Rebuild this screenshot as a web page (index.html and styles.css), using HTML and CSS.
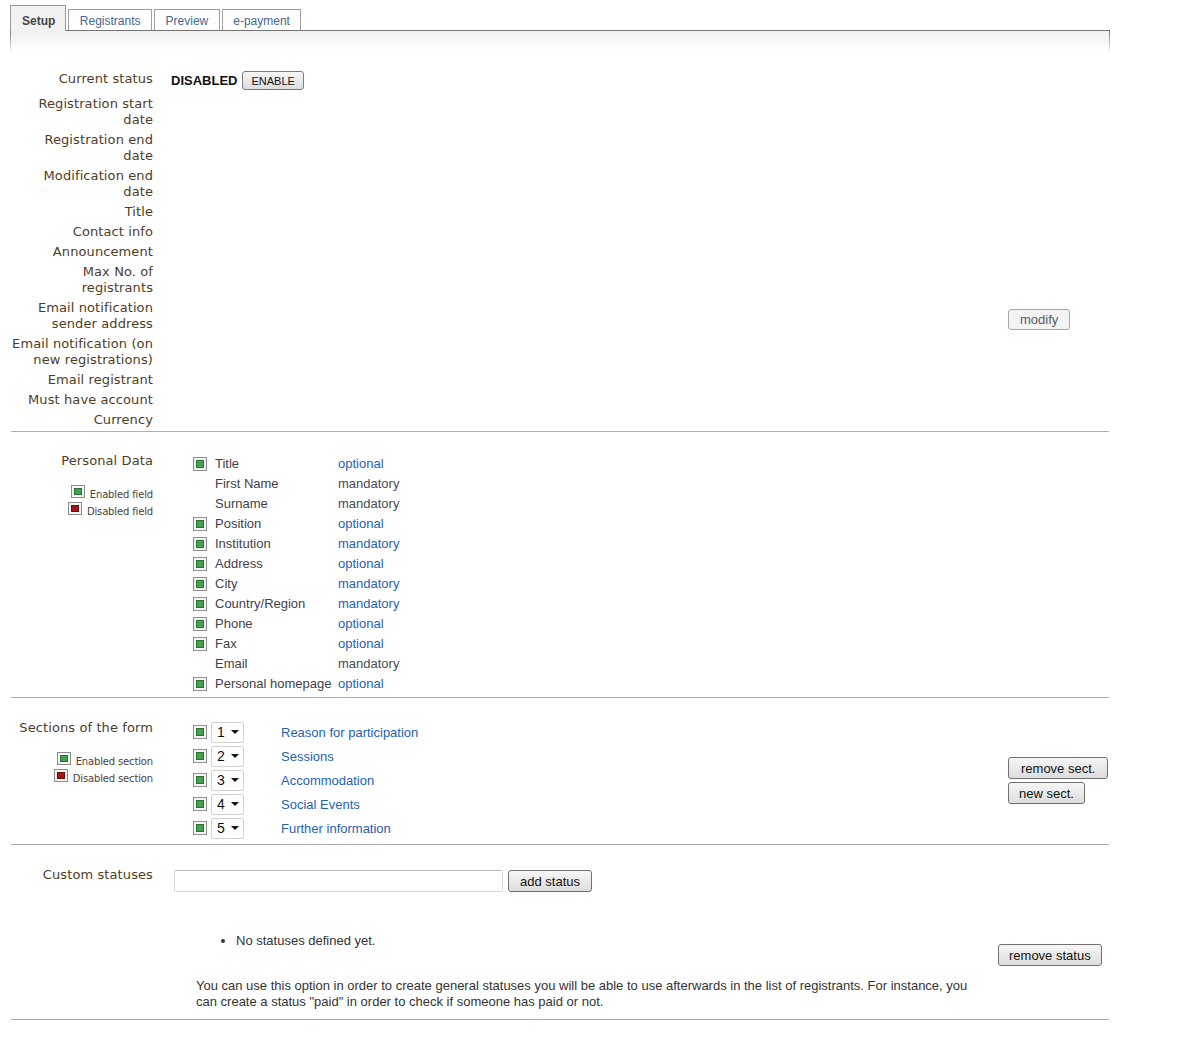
FILE: index.html
```html
<!DOCTYPE html>
<html>
<head>
<meta charset="utf-8">
<title>Registration setup</title>
<link rel="stylesheet" href="styles.css">
</head>
<body>
<div class="page">
  <div class="tabs">
    <span class="tab active">Setup</span>
    <span class="tab">Registrants</span>
    <span class="tab">Preview</span>
    <span class="tab">e-payment</span>
  </div>
  <div class="tabhead"></div>

  <div class="sections">
    <div class="section s-general">
      <div class="lbl">Current status</div>
      <div class="val status-val"><span class="disabled">DISABLED</span><button class="btn-small">ENABLE</button></div>
      <div class="lbl">Registration start<br>date</div><div class="val"></div>
      <div class="lbl">Registration end<br>date</div><div class="val"></div>
      <div class="lbl">Modification end<br>date</div><div class="val"></div>
      <div class="lbl">Title</div><div class="val"></div>
      <div class="lbl">Contact info</div><div class="val"></div>
      <div class="lbl">Announcement</div><div class="val"></div>
      <div class="lbl">Max No. of<br>registrants</div><div class="val"></div>
      <div class="lbl">Email notification<br>sender address</div><div class="val"></div>
      <div class="lbl">Email notification (on<br>new registrations)</div><div class="val"></div>
      <div class="lbl">Email registrant</div><div class="val"></div>
      <div class="lbl">Must have account</div><div class="val"></div>
      <div class="lbl">Currency</div><div class="val"></div>
      <div class="actions modify-col"><button class="btn-light">modify</button></div>
    </div>

    <div class="section s-personal">
      <div class="side">
        <div class="side-title pd-title">Personal Data</div>
        <div class="legend pd-legend">
          <div class="leg-item"><span class="chk sm"></span><span class="leg-text">Enabled field</span></div>
          <div class="leg-item"><span class="chk sm off"></span><span class="leg-text">Disabled field</span></div>
        </div>
      </div>
      <div class="body fields">
        <div class="frow"><span class="fchk"><span class="chk"></span></span><span class="fname">Title</span><a class="link">optional</a></div>
        <div class="frow"><span class="fchk"></span><span class="fname">First Name</span><span class="plain">mandatory</span></div>
        <div class="frow"><span class="fchk"></span><span class="fname">Surname</span><span class="plain">mandatory</span></div>
        <div class="frow"><span class="fchk"><span class="chk"></span></span><span class="fname">Position</span><a class="link">optional</a></div>
        <div class="frow"><span class="fchk"><span class="chk"></span></span><span class="fname">Institution</span><a class="link">mandatory</a></div>
        <div class="frow"><span class="fchk"><span class="chk"></span></span><span class="fname">Address</span><a class="link">optional</a></div>
        <div class="frow"><span class="fchk"><span class="chk"></span></span><span class="fname">City</span><a class="link">mandatory</a></div>
        <div class="frow"><span class="fchk"><span class="chk"></span></span><span class="fname">Country/Region</span><a class="link">mandatory</a></div>
        <div class="frow"><span class="fchk"><span class="chk"></span></span><span class="fname">Phone</span><a class="link">optional</a></div>
        <div class="frow"><span class="fchk"><span class="chk"></span></span><span class="fname">Fax</span><a class="link">optional</a></div>
        <div class="frow"><span class="fchk"></span><span class="fname">Email</span><span class="plain">mandatory</span></div>
        <div class="frow"><span class="fchk"><span class="chk"></span></span><span class="fname">Personal homepage</span><a class="link">optional</a></div>
      </div>
      <div class="actions"></div>
    </div>

    <div class="section s-sections">
      <div class="side">
        <div class="side-title">Sections of the form</div>
        <div class="legend sec-legend">
          <div class="leg-item"><span class="chk sm"></span><span class="leg-text">Enabled section</span></div>
          <div class="leg-item"><span class="chk sm off"></span><span class="leg-text">Disabled section</span></div>
        </div>
      </div>
      <div class="body secrows">
        <div class="srow"><span class="chk"></span><span class="sel">1</span><a class="link slink">Reason for participation</a></div>
        <div class="srow"><span class="chk"></span><span class="sel">2</span><a class="link slink">Sessions</a></div>
        <div class="srow"><span class="chk"></span><span class="sel">3</span><a class="link slink">Accommodation</a></div>
        <div class="srow"><span class="chk"></span><span class="sel">4</span><a class="link slink">Social Events</a></div>
        <div class="srow"><span class="chk"></span><span class="sel">5</span><a class="link slink">Further information</a></div>
      </div>
      <div class="actions sect-actions">
        <button class="btn btn-wide">remove sect.</button>
        <button class="btn">new sect.</button>
      </div>
    </div>

    <div class="section s-status">
      <div class="side">
        <div class="side-title">Custom statuses</div>
      </div>
      <div class="body">
        <div class="addrow"><input class="text-input" type="text"><button class="btn">add status</button></div>
        <div class="status-bottom">
          <div class="status-info">
            <ul class="status-list"><li>No statuses defined yet.</li></ul>
            <p class="note">You can use this option in order to create general statuses you will be able to use afterwards in the list of registrants. For instance, you can create a status "paid" in order to check if someone has paid or not.</p>
          </div>
          <button class="btn rm-status">remove status</button>
        </div>
      </div>
    </div>
  </div>
</div>
</body>
</html>
```

FILE: styles.css
```css
html, body {
  margin: 0;
  padding: 0;
  background: #fff;
}

body {
  font-family: "Liberation Sans", Arial, sans-serif;
  font-size: 13px;
  color: #333;
}

.page {
  width: 1100px;
  padding: 5px 0 0 10px;
}

/* tabs */
.tabs {
  display: flex;
  align-items: flex-end;
  gap: 2px;
}

.tab {
  display: block;
  border: 1px solid #a0a0a0;
  border-bottom: none;
  background: #fff;
  padding: 3px 10.5px 1px;
  line-height: 16px;
  font-size: 12px;
  color: #46678f;
}

.tab.active {
  position: relative;
  z-index: 1;
  margin-bottom: -1px;
  padding: 7px 10px 2px 11px;
  background: #f2f2f2;
  color: #444;
  font-weight: bold;
  border-color: #9a9a9a;
}

.tabhead {
  height: 21px;
  border-style: solid;
  border-width: 1px 1px 0 1px;
  border-image: linear-gradient(to bottom, #707070, #9a9a9a 30%, #ffffff) 1;
  background: linear-gradient(to bottom, #f0f0f0, #ffffff);
}

/* sections */
.sections {
  margin: 0 1px;
}

.section {
  display: grid;
  grid-template-columns: 142px 1fr 101px;
  column-gap: 18px;
  border-bottom: 1px solid #aeaeae;
  align-items: start;
}

.lbl, .side-title {
  font-family: Verdana, "DejaVu Sans", sans-serif;
  font-size: 13px;
  line-height: 16px;
  letter-spacing: 0.1px;
  color: #4e3d1f;
  text-align: right;
}

.s-general {
  padding: 17px 0 1px;
}

.s-general .lbl,
.s-general .val {
  padding: 2px 0;
}

.status-val {
  display: flex;
  align-items: center;
  height: 21px;
}

.s-general .lbl:first-child {
  padding-bottom: 7px;
}

.s-general .status-val {
  padding-top: 1px;
  padding-bottom: 3px;
}

.disabled {
  font-weight: bold;
  font-size: 13px;
  color: #111;
}

.btn-small {
  margin-left: 5px;
  height: 19px;
  padding: 0 8px;
  font-family: "Liberation Sans", Arial, sans-serif;
  font-size: 11px;
  color: #111;
  border: 1px solid #7a7a7a;
  border-radius: 3px;
  background: linear-gradient(to bottom, #f7f7f7, #dcdcdc);
}

.modify-col {
  grid-column: 3;
  grid-row: 1 / span 13;
  padding-top: 240px;
}

.btn-light {
  height: 21px;
  padding: 0 11px;
  font-family: "Liberation Sans", Arial, sans-serif;
  font-size: 13px;
  color: #5c5a66;
  border: 1px solid #a8a8a8;
  border-radius: 3px;
  background: #f3f3f3;
}

.btn {
  display: block;
  height: 22px;
  padding: 0 10px;
  font-family: "Liberation Sans", Arial, sans-serif;
  font-size: 13px;
  color: #111;
  border: 1px solid #707070;
  border-radius: 3px;
  background: linear-gradient(to bottom, #f6f6f6, #dddddd);
}

.btn-wide {
  padding: 0 12px;
}

/* side column */
.side {
  text-align: right;
}

.pd-title {
  margin-top: -1px;
}

.legend {
  display: flex;
  flex-direction: column;
  align-items: flex-end;
}

.pd-legend {
  margin-top: 16px;
}

.sec-legend {
  margin-top: 16px;
}

.leg-item {
  display: flex;
  align-items: flex-end;
  height: 17px;
}

.leg-item .chk {
  margin-bottom: 4px;
}

.leg-text {
  margin-left: 5px;
  margin-bottom: 1px;
  font-family: Verdana, "DejaVu Sans", sans-serif;
  font-size: 10px;
  line-height: 13px;
  letter-spacing: -0.15px;
  color: #4a4238;
}

/* checkbox icon */
.chk {
  display: inline-block;
  flex: none;
  width: 14px;
  height: 14px;
  box-sizing: border-box;
  border: 1px solid #8c8c8c;
  background: #f6f6f6;
  padding: 2px;
}

.chk::before {
  content: "";
  display: block;
  width: 8px;
  height: 8px;
  box-sizing: border-box;
  background: #42a24f;
  border: 1px solid #2c7134;
}

.chk.off::before {
  background: #a51616;
  border-color: #6a0d0d;
}

.chk.sm {
  width: 14px;
  height: 13px;
}

.chk.sm::before {
  height: 7px;
}

/* personal data */
.s-personal {
  padding: 22px 0 3px;
}

.fields {
  padding-left: 22px;
}

.frow {
  display: flex;
  align-items: center;
  height: 20px;
  line-height: 20px;
  font-size: 13px;
}

.fchk {
  display: flex;
  align-items: center;
  width: 22px;
  flex: none;
}

.fname {
  width: 123px;
  flex: none;
  color: #434048;
}

.plain {
  color: #4d4a52;
}

.link {
  color: #1f62b0;
  text-decoration: none;
}

/* sections of the form */
.s-sections {
  padding: 22px 0 4px;
}

.secrows {
  padding-left: 22px;
}

.srow {
  display: flex;
  align-items: center;
  height: 24px;
}

.sel {
  display: flex;
  align-items: center;
  justify-content: space-between;
  margin-left: 4px;
  width: 33px;
  height: 21px;
  box-sizing: border-box;
  padding: 0 4px 0 5px;
  border: 1px solid #d2d2d2;
  border-radius: 2px;
  background: #fff;
  font-size: 14px;
  color: #111;
}

.sel::after {
  content: "";
  width: 0;
  height: 0;
  border-left: 4px solid transparent;
  border-right: 4px solid transparent;
  border-top: 4px solid #111;
}

.slink {
  margin-left: 37px;
  font-size: 13px;
}

.sect-actions {
  padding-top: 37px;
  display: flex;
  flex-direction: column;
  align-items: flex-start;
  gap: 3px;
}

/* custom statuses */
.s-status {
  grid-template-columns: 142px 1fr;
  padding: 22px 0 9px;
}

.addrow {
  display: flex;
  margin-top: 3px;
  margin-left: 3px;
}

.text-input {
  width: 329px;
  height: 22px;
  box-sizing: border-box;
  margin: 0;
  border: 1px solid #d6d6d6;
  border-top-color: #bdbdbd;
  border-radius: 2px;
  background: #fff;
}

.addrow .btn {
  margin-left: 5px;
  padding: 0 11px;
}

.status-bottom {
  display: flex;
  align-items: flex-start;
  margin-top: 41px;
  margin-left: 25px;
}

.status-info {
  width: 790px;
  flex: none;
  font-size: 13px;
  line-height: 16px;
  color: #333;
}

.status-list {
  margin: 0;
  padding-left: 40px;
}

.note {
  margin: 29px 0 0;
}

.rm-status {
  margin-left: 12px;
  margin-top: 11px;
}
```
